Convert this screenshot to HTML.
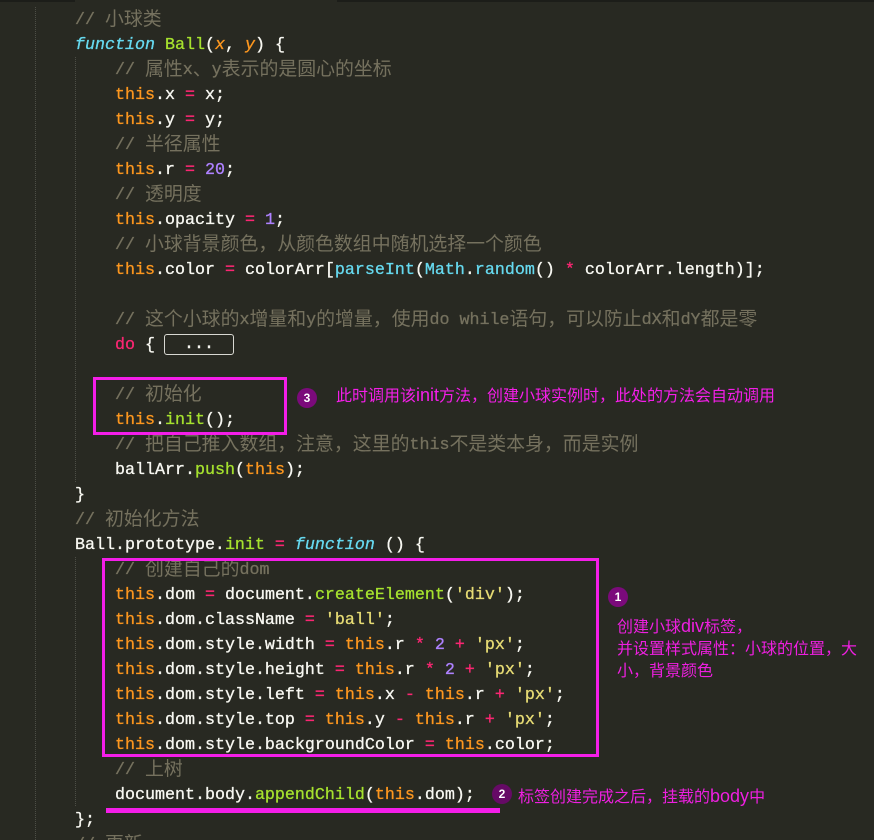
<!DOCTYPE html>
<html lang="zh-CN">
<head>
<meta charset="utf-8">
<title>Ball</title>
<style>
html,body{margin:0;padding:0;background:#282922;}
#w{position:relative;width:874px;height:840px;overflow:hidden;background:#282922;font-family:"Liberation Mono","Noto Sans CJK SC",monospace;font-size:16.67px;color:#f8f8f2;}
.l{position:absolute;white-space:pre;line-height:25px;height:25px;margin-top:1px;-webkit-text-stroke:.3px currentColor;}
.a{left:75px}.b{left:115px}
.z{font-family:"Noto Sans CJK SC","Liberation Sans",sans-serif;font-size:18.9px;line-height:0;position:relative;top:1px;-webkit-text-stroke:0;}
.c{color:#75715e}.t{color:#fd971f}.p{color:#f92672}.g{color:#a6e22e}.u{color:#66d9ef}.n{color:#ae81ff}.s{color:#e6db74}
.i{font-style:italic}
.bar{position:absolute;top:0;height:2px;background:#1c1d19}
.guide{position:absolute;width:0;border-left:1px dotted #4d4e46}
.box{position:absolute;box-sizing:border-box;border:3.5px solid #f41ee8}
.dot{position:absolute;width:20px;height:20px;border-radius:50%;background:#7b0a7b;color:#fff;font:bold 12px/20px "Liberation Sans",sans-serif;text-align:center}
.m{position:absolute;white-space:pre;color:#ee1fe0;font-family:"Liberation Sans","Noto Sans CJK SC",sans-serif;font-size:16px;line-height:22px}
.m b{font-weight:normal;font-size:18px;line-height:0}
</style>
</head>
<body>
<div id="w">
<div class="bar" style="left:0;width:75px"></div>
<div class="bar" style="left:337px;width:537px"></div>
<div class="guide" style="left:35px;top:7px;height:833px"></div>
<div class="guide" style="left:75px;top:57px;height:425px"></div>
<div class="guide" style="left:75px;top:557px;height:249px"></div>

<div class="l a c" style="top:7px">// <span class="z">小球类</span></div>
<div class="l a" style="top:32px"><span class="u i">function</span> <span class="g">Ball</span>(<span class="t i">x</span>, <span class="t i">y</span>) {</div>
<div class="l b c" style="top:57px">// <span class="z">属性</span>x<span class="z">、</span>y<span class="z">表示的是圆心的坐标</span></div>
<div class="l b" style="top:82px"><span class="t">this</span>.x <span class="p">=</span> x;</div>
<div class="l b" style="top:107px"><span class="t">this</span>.y <span class="p">=</span> y;</div>
<div class="l b c" style="top:132px">// <span class="z">半径属性</span></div>
<div class="l b" style="top:157px"><span class="t">this</span>.r <span class="p">=</span> <span class="n">20</span>;</div>
<div class="l b c" style="top:182px">// <span class="z">透明度</span></div>
<div class="l b" style="top:207px"><span class="t">this</span>.opacity <span class="p">=</span> <span class="n">1</span>;</div>
<div class="l b c" style="top:232px">// <span class="z">小球背景颜色，从颜色数组中随机选择一个颜色</span></div>
<div class="l b" style="top:257px"><span class="t">this</span>.color <span class="p">=</span> colorArr[<span class="u">parseInt</span>(<span class="u">Math</span>.<span class="u">random</span>() <span class="p">*</span> colorArr.length)];</div>
<div class="l b c" style="top:307px">// <span class="z">这个小球的</span>x<span class="z">增量和</span>y<span class="z">的增量，使用</span>do while<span class="z">语句，可以防止</span>dX<span class="z">和</span>dY<span class="z">都是零</span></div>
<div class="l b" style="top:332px"><span class="p">do</span> {</div>
<div style="position:absolute;left:164px;top:334px;width:70px;height:21px;box-sizing:border-box;border:1px solid #d8d8d2;border-radius:3px;color:#f8f8f2;text-align:center;line-height:19px;white-space:pre;-webkit-text-stroke:.4px #f8f8f2">...</div>
<div class="l b c" style="top:382px">// <span class="z">初始化</span></div>
<div class="l b" style="top:407px"><span class="t">this</span>.<span class="g">init</span>();</div>
<div class="l b c" style="top:432px">// <span class="z">把自己推入数组，注意，这里的</span>this<span class="z">不是类本身，而是实例</span></div>
<div class="l b" style="top:457px">ballArr.<span class="g">push</span>(<span class="t">this</span>);</div>
<div class="l a" style="top:482px">}</div>
<div class="l a c" style="top:507px">// <span class="z">初始化方法</span></div>
<div class="l a" style="top:532px">Ball.prototype.<span class="g">init</span> <span class="p">=</span> <span class="u i">function</span> () {</div>
<div class="l b c" style="top:557px">// <span class="z">创建自己的</span>dom</div>
<div class="l b" style="top:582px"><span class="t">this</span>.dom <span class="p">=</span> document.<span class="g">createElement</span>(<span class="s">'div'</span>);</div>
<div class="l b" style="top:607px"><span class="t">this</span>.dom.className <span class="p">=</span> <span class="s">'ball'</span>;</div>
<div class="l b" style="top:632px"><span class="t">this</span>.dom.style.width <span class="p">=</span> <span class="t">this</span>.r <span class="p">*</span> <span class="n">2</span> <span class="p">+</span> <span class="s">'px'</span>;</div>
<div class="l b" style="top:657px"><span class="t">this</span>.dom.style.height <span class="p">=</span> <span class="t">this</span>.r <span class="p">*</span> <span class="n">2</span> <span class="p">+</span> <span class="s">'px'</span>;</div>
<div class="l b" style="top:682px"><span class="t">this</span>.dom.style.left <span class="p">=</span> <span class="t">this</span>.x <span class="p">-</span> <span class="t">this</span>.r <span class="p">+</span> <span class="s">'px'</span>;</div>
<div class="l b" style="top:707px"><span class="t">this</span>.dom.style.top <span class="p">=</span> <span class="t">this</span>.y <span class="p">-</span> <span class="t">this</span>.r <span class="p">+</span> <span class="s">'px'</span>;</div>
<div class="l b" style="top:732px"><span class="t">this</span>.dom.style.backgroundColor <span class="p">=</span> <span class="t">this</span>.color;</div>
<div class="l b c" style="top:757px">// <span class="z">上树</span></div>
<div class="l b" style="top:782px">document.body.<span class="g">appendChild</span>(<span class="t">this</span>.dom);</div>
<div class="l a" style="top:807px">};</div>
<div class="l a c" style="top:832px">// <span class="z">更新</span></div>

<div class="box" style="left:93px;top:377px;width:194px;height:58px"></div>
<div class="box" style="left:102px;top:558px;width:497px;height:199px"></div>
<div style="position:absolute;left:106px;top:808px;width:394px;height:5px;background:#f41ee8"></div>

<div class="dot" style="left:297px;top:388px">3</div>
<div class="dot" style="left:608px;top:587px">1</div>
<div class="dot" style="left:492px;top:784px;background:#660a66">2</div>

<div class="m" style="left:336px;top:386px;color:#f41ee8">此时调用该<b>init</b>方法，创建小球实例时，此处的方法会自动调用</div>
<div class="m" style="left:617px;top:617px">创建小球<b>div</b>标签，</div>
<div class="m" style="left:617px;top:639px">并设置样式属性：小球的位置，大</div>
<div class="m" style="left:617px;top:661px">小，背景颜色</div>
<div class="m" style="left:518px;top:787px">标签创建完成之后，挂载的<b>body</b>中</div>
</div>
</body>
</html>
